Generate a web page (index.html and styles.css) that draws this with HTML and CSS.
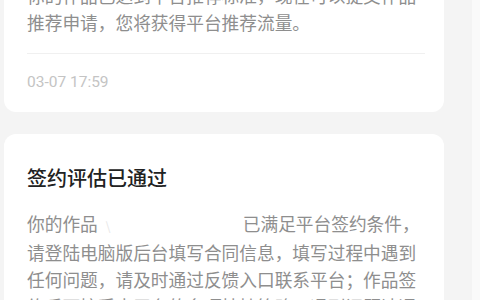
FILE: index.html
```html
<!DOCTYPE html>
<html lang="zh-CN">
<head>
<meta charset="utf-8" />
<title>消息通知</title>
<link rel="stylesheet" href="styles.css">
</head>
<body>
<div class="page">
  <div class="list">
    <div class="card">
      <div class="desc">你的作品已达到平台推荐标准，现在可以提交作品推荐申请，您将获得平台推荐流量。</div>
      <div class="line"></div>
      <div class="time">03-07 17:59</div>
    </div>
    <div class="card">
      <div class="title">签约评估已通过</div>
      <div class="desc">你的作品<span class="blank">\</span>已满足平台签约条件，请登陆电脑版后台填写合同信息，填写过程中遇到任何问题，请及时通过反馈入口联系平台；作品签约后可接受本平台的多项扶持策略，遇到问题请通过客服反馈。</div>
    </div>
  </div>
  <div class="side"></div>
</div>
</body>
</html>
```

FILE: styles.css
```css
*{box-sizing:border-box;}
html,body{margin:0;height:100%;}
body{background:#f4f4f4;font-family:"Noto Sans CJK SC","Noto Sans",sans-serif;overflow:hidden;}
.page{display:flex;height:100%;}
.list{width:440px;margin:-40px 0 0 4px;display:flex;flex-direction:column;gap:22px;}
.card{background:#fff;border-radius:12px;padding:22px 23px 20px 23px;}
.card .title{font-size:20px;line-height:28px;color:#222;font-weight:500;margin-top:8px;}
.card .title + .desc{margin-top:18px;}
.desc{font-size:17.7px;line-height:27px;color:#8e8e8e;}
.blank{display:inline-block;width:145px;color:#e6e6e6;font-size:12px;padding-left:8px;}
.line{height:1px;background:#f0f0f0;margin-top:17px;margin-right:-4px;}
.time{font-family:Roboto,"Noto Sans CJK SC",sans-serif;font-size:15.5px;line-height:20px;color:#c4c4c4;margin-top:18px;}
.side{margin-left:28px;flex:1;background:#fafafa;}
```
